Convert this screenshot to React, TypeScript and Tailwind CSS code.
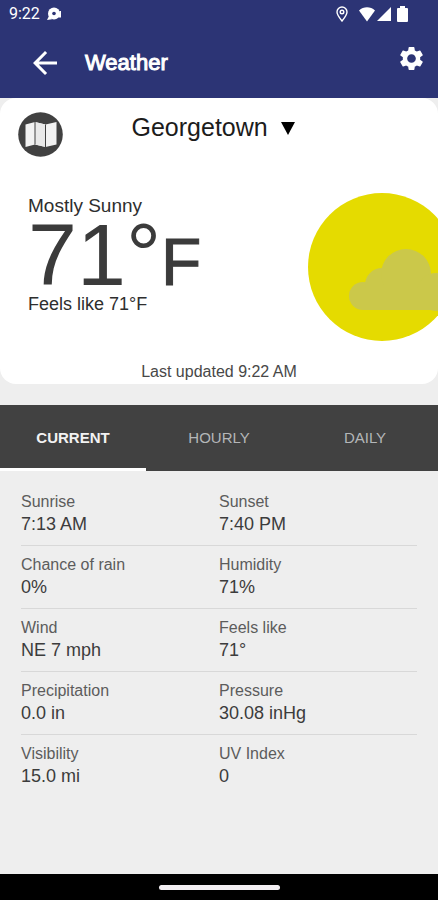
import { useState } from "react";
import { MdArrowBack, MdSettings } from "react-icons/md";

const tabs = ["CURRENT", "HOURLY", "DAILY"];

const readings = [
  [
    { label: "Sunrise", value: "7:13 AM" },
    { label: "Sunset", value: "7:40 PM" },
  ],
  [
    { label: "Chance of rain", value: "0%" },
    { label: "Humidity", value: "71%" },
  ],
  [
    { label: "Wind", value: "NE 7 mph" },
    { label: "Feels like", value: "71°" },
  ],
  [
    { label: "Precipitation", value: "0.0 in" },
    { label: "Pressure", value: "30.08 inHg" },
  ],
  [
    { label: "Visibility", value: "15.0 mi" },
    { label: "UV Index", value: "0" },
  ],
];

function StatusBar() {
  return (
    <div className="flex h-7 items-center pr-[30px] pl-[9px]">
      <span className="font-['Roboto',sans-serif] text-base leading-5">9:22</span>
      <svg className="ml-[6px]" width="16" height="16" viewBox="0 0 16 16" fill="currentColor" aria-hidden="true">
        <circle cx="8" cy="7.5" r="6" />
        <path d="M1 14 L3 10 L6 13.2 Z" />
        <path d="M13.5 5 H15 V11.5 H12.5 Z" />
        <circle cx="8" cy="7.5" r="1.8" fill="#2c3475" />
      </svg>
      <svg className="ml-auto" width="12" height="16" viewBox="0 0 12 16" fill="none" stroke="currentColor" strokeWidth="1.4" aria-hidden="true">
        <path d="M6 15 C3 11.3 1 8.6 1 6 A5 5 0 0 1 11 6 C11 8.6 9 11.3 6 15 Z" />
        <circle cx="6" cy="6" r="1.8" />
      </svg>
      <svg className="ml-[11px]" width="16" height="15" viewBox="0 0 16 15" fill="currentColor" aria-hidden="true">
        <path d="M0 3.6 C4.5 -0.8 11.5 -0.8 16 3.6 L8 14.5 Z" />
      </svg>
      <svg className="ml-[2px]" width="14" height="14" viewBox="0 0 14 14" fill="currentColor" aria-hidden="true">
        <path d="M14 0 V14 H0 Z" />
      </svg>
      <svg className="ml-[6px]" width="11" height="16" viewBox="0 0 11 16" fill="currentColor" aria-hidden="true">
        <path d="M3 0 H8 V2 H10 Q11 2 11 3 V15 Q11 16 10 16 H1 Q0 16 0 15 V3 Q0 2 1 2 H3 Z" />
      </svg>
    </div>
  );
}

function MapIcon() {
  return (
    <svg width="45" height="45" viewBox="0 0 45 45" aria-hidden="true">
      <circle cx="22.5" cy="22.5" r="22.3" fill="#414141" />
      <path d="M7.5 12.5 L17 10 L27.5 12.5 L38.5 10 V32.5 L27.5 35 L17 32.5 L7.5 35 Z" fill="#f2f2f2" />
      <path d="M17 10 L27.5 12.5 V35 L17 32.5 Z" fill="#e9e9e9" />
      <path d="M17 10 V32.5 M27.5 12.5 V35" stroke="#414141" strokeWidth="1" />
    </svg>
  );
}

function MostlySunny() {
  return (
    <svg className="-mr-[18px] shrink-0" width="148" height="148" viewBox="0 0 148 148" role="img" aria-label="Sun with a cloud">
      <circle cx="74" cy="74" r="74" fill="#e5db00" />
      <g fill="#cbc84a">
        <circle cx="55" cy="103" r="14" />
        <circle cx="74" cy="92" r="17" />
        <circle cx="98" cy="81" r="25" />
        <circle cx="128" cy="99" r="19" />
        <path d="M55 95 H140 V117 H55 Z" />
      </g>
    </svg>
  );
}

export default function App() {
  const [active, setActive] = useState("CURRENT");

  return (
    <div className="flex min-h-screen flex-col bg-[#eeeeee] font-['Liberation_Sans',Arial,sans-serif]">
      <header className="bg-[#2c3475] text-white">
        <StatusBar />
        <div className="flex h-[70px] items-center pr-[12px] pl-[27px]">
          <button type="button" aria-label="Back">
            <MdArrowBack size={36} />
          </button>
          <h1 className="ml-[22px] text-[22px] leading-7 [-webkit-text-stroke:1px]">Weather</h1>
          <button type="button" aria-label="Settings" className="ml-auto pb-[10px]">
            <MdSettings size={29} />
          </button>
        </div>
      </header>

      <main className="flex-1">
        <section className="overflow-hidden rounded-[16px] bg-white pt-[14px] pb-[2px] text-[#2e2e2e]">
          <div className="grid grid-cols-[45px_1fr_45px] px-[18px]">
            <button type="button" aria-label="Map">
              <MapIcon />
            </button>
            <div className="relative justify-self-center">
              <select aria-label="Location" className="h-[30px] appearance-none bg-transparent pr-[38px] text-[25px] leading-[30px] text-[#1c1c1c]">
                <option>Georgetown</option>
              </select>
              <svg className="pointer-events-none absolute top-[10px] right-3" width="14" height="13" viewBox="0 0 14 13" fill="#000000" aria-hidden="true">
                <path d="M0 0 H14 L7 13 Z" />
              </svg>
            </div>
          </div>

          <div className="mt-9 flex justify-between pl-[28px]">
            <div>
              <p className="text-[19px] leading-[26px]">Mostly Sunny</p>
              <p className="flex h-[72px] items-baseline text-[88px] leading-[72px] text-[#3b3b3b]">
                71°<span className="text-[66px] leading-[66px] [-webkit-text-stroke:1px]">F</span>
              </p>
              <p className="text-[18px] leading-[26px]">Feels like 71°F</p>
            </div>
            <MostlySunny />
          </div>

          <p className="mt-[21px] text-center text-base leading-5 text-[#484848]">Last updated 9:22 AM</p>
        </section>

        <div role="tablist" className="mt-[21px] grid h-[66px] grid-cols-3 bg-[#414141]">
          {tabs.map((tab) => (
            <button
              key={tab}
              type="button"
              role="tab"
              aria-selected={tab === active}
              onClick={() => setActive(tab)}
              className={
                tab === active
                  ? "border-b-3 border-white pt-1 text-[15px] font-bold text-[#f2f2f2]"
                  : "border-b-3 border-transparent pt-1 text-[15px] text-[#b4b6b8]"
              }
            >
              {tab}
            </button>
          ))}
        </div>

        <dl className="px-[21px] pt-3">
          {readings.map((row) => (
            <div
              key={row[0].label}
              className="grid grid-cols-2 border-b border-[#d8d8d8] pt-2 pb-[10px] last:border-b-0"
            >
              {row.map((item) => (
                <div key={item.label}>
                  <dt className="text-base leading-[22px] text-[#5c5c5c]">{item.label}</dt>
                  <dd className="text-[18px] leading-[22px] text-[#3c3c3c]">{item.value}</dd>
                </div>
              ))}
            </div>
          ))}
        </dl>
      </main>

      <footer className="flex h-[26px] items-center justify-center bg-black">
        <div className="h-[5px] w-[121px] rounded-full bg-[#f3eff3]" />
      </footer>
    </div>
  );
}
